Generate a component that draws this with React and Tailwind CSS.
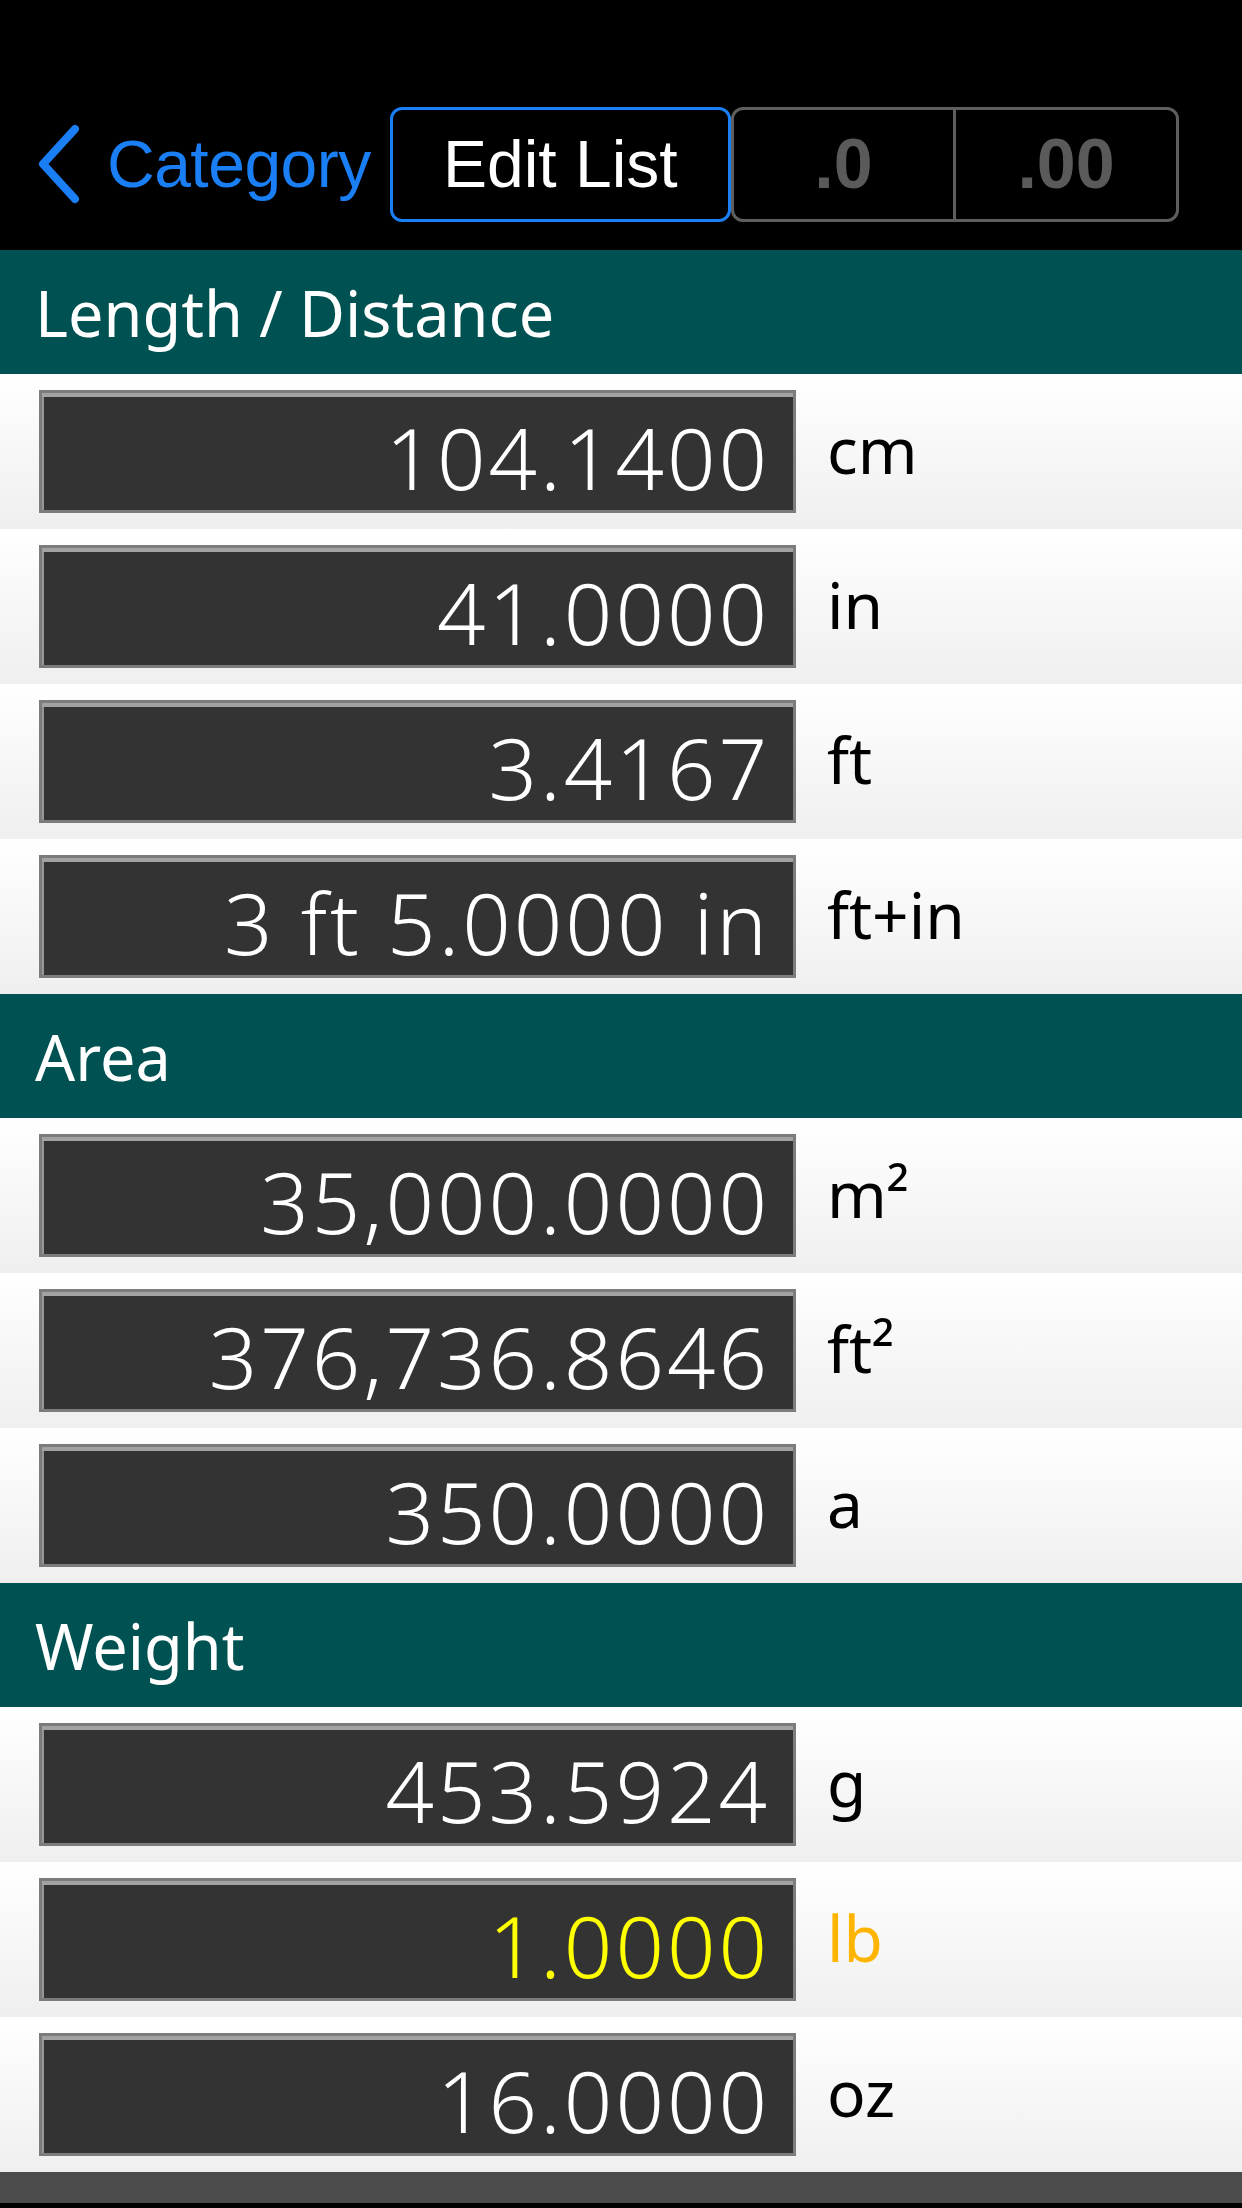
import React from "react";

const sections = [
  {
    title: "Length / Distance",
    rows: [
      { value: "104.1400", unit: "cm" },
      { value: "41.0000", unit: "in" },
      { value: "3.4167", unit: "ft" },
      { value: "3 ft 5.0000 in", unit: "ft+in" },
    ],
  },
  {
    title: "Area",
    rows: [
      { value: "35,000.0000", unit: "m²" },
      { value: "376,736.8646", unit: "ft²" },
      { value: "350.0000", unit: "a" },
    ],
  },
  {
    title: "Weight",
    rows: [
      { value: "453.5924", unit: "g" },
      { value: "1.0000", unit: "lb", active: true },
      { value: "16.0000", unit: "oz" },
    ],
  },
];

function NavBar() {
  return (
    <div className="flex h-[250px] flex-col bg-black">
      <div className="h-[99px]" />
      <div className="flex h-[130px] items-center font-['Liberation_Sans',Arial,sans-serif]">
        <div className="ml-[35px] flex items-center text-[#1a7ff5]">
          <svg width="48" height="82" viewBox="0 0 48 82" fill="none">
            <polyline
              points="40,6 8,41 40,76"
              stroke="#1a7ff5"
              strokeWidth="8"
              strokeLinecap="round"
              strokeLinejoin="round"
            />
          </svg>
          <span className="ml-[24px] text-[66px] leading-none tracking-[-0.5px]">Category</span>
        </div>
        <div className="ml-[19px] flex h-[115px] w-[341px] items-center justify-center rounded-[12px] border-[3px] border-[#1a7ff5] text-[66px] leading-none text-white">
          Edit List
        </div>
        <div className="flex h-[115px] w-[448px] rounded-[12px] border-[3px] border-[#5e5e5e] text-[70px] font-bold leading-none text-[#5a5a5a]">
          <div className="flex flex-1 items-center justify-center border-r-[3px] border-[#5e5e5e]">.0</div>
          <div className="flex flex-1 items-center justify-center">.00</div>
        </div>
      </div>
    </div>
  );
}

function Row({ value, unit, active }) {
  return (
    <div className="flex h-[155px] items-center bg-gradient-to-b from-white to-[#efefef]">
      <div className="ml-[39px] flex h-[123px] w-[757px] items-center justify-end border-[3px] border-[#7c7c7c] bg-[#333333] pr-[23px] pt-[12px] shadow-[inset_0_4px_0_#a2a2a2,inset_2px_0_0_#959595]">
        <span
          className={
            "text-[85px] font-light leading-none tracking-[3px] " +
            (active ? "text-[#ffff00]" : "text-white")
          }
        >
          {value}
        </span>
      </div>
      <span
        className={
          "ml-[31px] mb-[4px] text-[64px] leading-none " +
          (active ? "text-[#ffb400]" : "text-black")
        }
      >
        {unit}
      </span>
    </div>
  );
}

export default function App() {
  return (
    <div className="flex h-[2208px] w-[1242px] flex-col bg-black font-['Noto_Sans',sans-serif]">
      <NavBar />
      {sections.map((s) => (
        <div key={s.title}>
          <div className="flex h-[124px] items-center bg-[#005151] pl-[35px] text-[63px] leading-none text-white">
            {s.title}
          </div>
          {s.rows.map((r) => (
            <Row key={r.unit} {...r} />
          ))}
        </div>
      ))}
      <div className="h-[31px] bg-[#4b4b4b]" />
    </div>
  );
}
